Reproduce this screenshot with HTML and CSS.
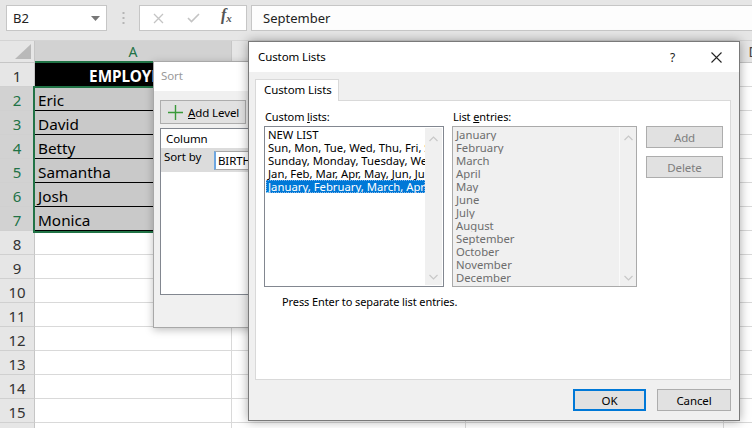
FILE: index.html
```html
<!DOCTYPE html>
<html>
<head>
<meta charset="utf-8">
<link rel="stylesheet" href="styles.css">
</head>
<body>
<div class="app">
  <div class="formula-bar">
    <div class="namebox">
      <span>B2</span>
      <svg class="dd" width="9" height="5" viewBox="0 0 9 5"><path d="M0 0H9L4.5 5Z" fill="#777"/></svg>
    </div>
    <div class="grip">
      <svg width="3" height="12" viewBox="0 0 3 12"><rect x="0.5" y="0" width="2" height="2" fill="#b5b5b5"/><rect x="0.5" y="5" width="2" height="2" fill="#b5b5b5"/><rect x="0.5" y="10" width="2" height="2" fill="#b5b5b5"/></svg>
    </div>
    <div class="fx-box">
      <svg class="ic-x" width="11" height="11" viewBox="0 0 11 11"><path d="M1 1L10 10M10 1L1 10" stroke="#c4c4c4" stroke-width="1.3" fill="none"/></svg>
      <svg class="ic-ok" width="13" height="10" viewBox="0 0 13 10"><path d="M1 5L4.5 8.5L12 1" stroke="#c4c4c4" stroke-width="1.6" fill="none"/></svg>
      <span class="fx">f<sub>x</sub></span>
    </div>
    <div class="formula-input">September</div>
  </div>

  <div class="sheet">
    <div class="corner"><span class="tri"></span></div>
    <div class="colhead sel">A</div>
    <div class="colhead">B</div>
    <div class="colhead">C</div>
    <div class="colhead">D</div>

    <div class="rowhead">1</div><div class="cell title">EMPLOYEES</div><div class="cell"></div><div class="cell"></div><div class="cell"></div>
    <div class="rowhead sel">2</div><div class="cell name">Eric</div><div class="cell"></div><div class="cell"></div><div class="cell"></div>
    <div class="rowhead sel">3</div><div class="cell name">David</div><div class="cell"></div><div class="cell"></div><div class="cell"></div>
    <div class="rowhead sel">4</div><div class="cell name">Betty</div><div class="cell"></div><div class="cell"></div><div class="cell"></div>
    <div class="rowhead sel">5</div><div class="cell name">Samantha</div><div class="cell"></div><div class="cell"></div><div class="cell"></div>
    <div class="rowhead sel">6</div><div class="cell name">Josh</div><div class="cell"></div><div class="cell"></div><div class="cell"></div>
    <div class="rowhead sel">7</div><div class="cell name">Monica</div><div class="cell"></div><div class="cell"></div><div class="cell"></div>
    <div class="rowhead">8</div><div class="cell"></div><div class="cell"></div><div class="cell"></div><div class="cell"></div>
    <div class="rowhead">9</div><div class="cell"></div><div class="cell"></div><div class="cell"></div><div class="cell"></div>
    <div class="rowhead">10</div><div class="cell"></div><div class="cell"></div><div class="cell"></div><div class="cell"></div>
    <div class="rowhead">11</div><div class="cell"></div><div class="cell"></div><div class="cell"></div><div class="cell"></div>
    <div class="rowhead">12</div><div class="cell"></div><div class="cell"></div><div class="cell"></div><div class="cell"></div>
    <div class="rowhead">13</div><div class="cell"></div><div class="cell"></div><div class="cell"></div><div class="cell"></div>
    <div class="rowhead">14</div><div class="cell"></div><div class="cell"></div><div class="cell"></div><div class="cell"></div>
    <div class="rowhead">15</div><div class="cell"></div><div class="cell"></div><div class="cell"></div><div class="cell"></div>
    <div class="rowhead">16</div><div class="cell"></div><div class="cell"></div><div class="cell"></div><div class="cell"></div>
  </div>

  <div class="selection"></div>

  <div class="dlg sort-dlg">
    <div class="sort-title">Sort</div>
    <div class="sort-body">
      <div class="sort-toolbar">
        <button class="btn add-level">
          <svg width="15" height="15" viewBox="0 0 15 15"><path d="M7.5 0V15M0 7.5H15" stroke="#3a9a3a" stroke-width="1.4" fill="none"/></svg>
          <span><u>A</u>dd Level</span>
        </button>
      </div>
      <div class="sort-grid">
        <div class="sort-head">Column</div>
        <div class="sort-row">
          <span class="sort-lbl">Sort by</span>
          <span class="combo">BIRTH</span>
        </div>
      </div>
    </div>
  </div>

  <div class="dlg custom-dlg">
    <div class="cl-titlebar">
      <span class="cl-title">Custom Lists</span>
      <span class="help">?</span>
      <svg class="close" width="11" height="11" viewBox="0 0 11 11"><path d="M0.5 0.5L10.5 10.5M10.5 0.5L0.5 10.5" stroke="#222" stroke-width="1.1" fill="none"/></svg>
    </div>
    <div class="cl-body">
      <div class="tabs"><div class="tab">Custom Lists</div></div>
      <div class="panel">
        <div class="cols">
          <div class="col-left">
            <div class="lbl">Custom <u>l</u>ists:</div>
            <div class="listbox lb-left">
              <div class="items">
                <div class="item">NEW LIST</div>
                <div class="item">Sun, Mon, Tue, Wed, Thu, Fri, Sat</div>
                <div class="item">Sunday, Monday, Tuesday, Wednesday, Thursday</div>
                <div class="item">Jan, Feb, Mar, Apr, May, Jun, Jul, Aug</div>
                <div class="item selected">January, February, March, April, May</div>
              </div>
              <div class="scroll">
                <svg width="9" height="6" viewBox="0 0 9 6"><path d="M0.5 5L4.5 1L8.5 5" stroke="#c8c8c8" stroke-width="1.2" fill="none"/></svg>
                <svg width="9" height="6" viewBox="0 0 9 6"><path d="M0.5 1L4.5 5L8.5 1" stroke="#c8c8c8" stroke-width="1.2" fill="none"/></svg>
              </div>
            </div>
          </div>
          <div class="col-mid">
            <div class="lbl">List <u>e</u>ntries:</div>
            <div class="listbox lb-right">
              <div class="items">
                <div class="item">January</div>
                <div class="item">February</div>
                <div class="item">March</div>
                <div class="item">April</div>
                <div class="item">May</div>
                <div class="item">June</div>
                <div class="item">July</div>
                <div class="item">August</div>
                <div class="item">September</div>
                <div class="item">October</div>
                <div class="item">November</div>
                <div class="item">December</div>
              </div>
              <div class="scroll">
                <svg width="9" height="6" viewBox="0 0 9 6"><path d="M0.5 5L4.5 1L8.5 5" stroke="#c8c8c8" stroke-width="1.2" fill="none"/></svg>
                <svg width="9" height="6" viewBox="0 0 9 6"><path d="M0.5 1L4.5 5L8.5 1" stroke="#c8c8c8" stroke-width="1.2" fill="none"/></svg>
              </div>
            </div>
          </div>
          <div class="col-right">
            <button class="btn side-btn">Add</button>
            <button class="btn side-btn">Delete</button>
          </div>
        </div>
        <div class="hint">Press Enter to separate list entries.</div>
      </div>
      <div class="footer">
        <button class="btn foot-btn default">OK</button>
        <button class="btn foot-btn">Cancel</button>
      </div>
    </div>
  </div>
</div>
</body>
</html>
```

FILE: styles.css
```css
* { box-sizing: border-box; }
html, body { margin: 0; padding: 0; }
body {
  width: 752px;
  height: 428px;
  overflow: hidden;
  background: #fff;
  font-family: "Noto Sans", "Open Sans", sans-serif;
}
.app {
  position: relative;
  width: 752px;
  height: 428px;
  overflow: hidden;
}

/* formula bar */
.formula-bar {
  height: 41px;
  background: #e6e6e6;
  display: flex;
  align-items: flex-start;
  padding: 5px 0 0 6px;
  border-bottom: 1px solid #d4d4d4;
}
.namebox {
  width: 101px;
  height: 26px;
  background: #fff;
  border: 1px solid #c6c6c6;
  display: flex;
  align-items: center;
  justify-content: space-between;
  padding: 0 6px 0 6px;
  font-size: 13px;
  color: #222;
}
.namebox .dd { margin-top: 1px; }
.grip {
  width: 32px;
  height: 26px;
  display: flex;
  align-items: center;
  justify-content: center;
}
.fx-box {
  width: 108px;
  height: 26px;
  background: #fff;
  border: 1px solid #c6c6c6;
  display: flex;
  align-items: center;
  padding-left: 13px;
}
.ic-x { margin-right: 23px; }
.ic-ok { margin-right: 21px; }
.fx {
  font-family: "Liberation Serif", "DejaVu Serif", serif;
  font-style: italic;
  font-weight: bold;
  font-size: 16px;
  line-height: 16px;
  color: #555;
  margin-top: -3px;
}
.fx sub { font-size: 11px; vertical-align: -2px; }
.formula-input {
  flex: 1;
  margin-left: 4px;
  height: 26px;
  background: #fdfdfd;
  border: 1px solid #c6c6c6;
  border-right: none;
  padding-left: 11px;
  font-size: 13px;
  line-height: 24px;
  color: #222;
}

/* sheet */
.sheet {
  display: grid;
  grid-template-columns: 35px 197px 234px 258px 60px;
  grid-template-rows: 22px;
  grid-auto-rows: 24px;
}
.corner {
  background: #e6e6e6;
  border-right: 1px solid #c6c6c6;
  border-bottom: 1px solid #c6c6c6;
  position: relative;
}
.tri {
  position: absolute;
  right: 3px;
  bottom: 3px;
  width: 0;
  height: 0;
  border-left: 16px solid transparent;
  border-bottom: 15px solid #b9b9b9;
}
.colhead {
  background: #e6e6e6;
  border-right: 1px solid #c6c6c6;
  border-bottom: 1px solid #c6c6c6;
  text-align: center;
  font-size: 14px;
  line-height: 22px;
  color: #444;
}
.colhead.sel {
  background: #d2d2d2;
  color: #217346;
  border-bottom: 2px solid #217346;
}
.rowhead {
  background: #e6e6e6;
  border-right: 1px solid #c6c6c6;
  border-bottom: 1px solid #d0d0d0;
  text-align: center;
  font-size: 15px;
  line-height: 21px;
  padding-top: 3px;
  color: #333;
}
.rowhead.sel {
  background: #d2d2d2;
  color: #217346;
}
.cell {
  border-right: 1px solid #d9d9d9;
  border-bottom: 1px solid #d9d9d9;
  font-size: 15.3px;
  line-height: 21px;
  padding-top: 3px;
  padding-left: 3px;
  white-space: nowrap;
  overflow: hidden;
  color: #000;
}
.cell.title {
  background: #000;
  color: #fff;
  font-weight: bold;
  text-align: center;
  padding-left: 0;
}
.cell.name {
  background: #c9c9c9;
  border-bottom: 1px solid #000;
  border-right: 1px solid #000;
}
.selection {
  position: absolute;
  left: 33px;
  top: 86px;
  width: 202px;
  height: 147px;
  border: 2px solid #217346;
  pointer-events: none;
}

/* dialogs */
.dlg {
  position: absolute;
  background: #f0f0f0;
  font-size: 11px;
  letter-spacing: -0.1px;
}
.sort-dlg {
  left: 153px;
  top: 61px;
  width: 300px;
  height: 267px;
  border: 1px solid #a8a8a8;
  box-shadow: 0 2px 8px rgba(0,0,0,0.25);
}
.sort-title {
  height: 29px;
  background: #fff;
  font-size: 11.5px;
  color: #9a9a9a;
  padding: 6px 0 0 7px;
}
.sort-body { padding: 9px 0 0 6px; }
.btn {
  font-family: inherit;
  letter-spacing: inherit;
  background: #e1e1e1;
  border: 1px solid #adadad;
  font-size: 11px;
  color: #000;
  padding: 0;
  margin: 0;
}
.add-level {
  width: 86px;
  height: 24px;
  display: flex;
  align-items: center;
  padding-left: 7px;
  gap: 5px;
  font-size: 11.5px;
}
.sort-grid {
  margin-top: 4px;
  height: 167px;
  background: #fff;
  border: 1px solid #828790;
  padding-top: 2px;
}
.sort-head {
  font-size: 11.5px;
  padding-left: 5px;
  height: 17px;
}
.sort-row {
  height: 24px;
  background: #dcdcdc;
  display: flex;
  align-items: center;
  padding-left: 3px;
}
.sort-lbl {
  font-size: 11.5px;
  width: 50px;
  align-self: flex-start;
  margin-top: 1px;
}
.combo {
  height: 19px;
  width: 120px;
  background: #fff;
  border: 1px solid #a8a8a8;
  border-left: 2px solid #6ea6e0;
  font-size: 11.5px;
  line-height: 17px;
  padding-left: 2px;
}

.custom-dlg {
  left: 248px;
  top: 41px;
  width: 492px;
  height: 380px;
  border: 1px solid #7a7a7a;
  box-shadow: 0 0 10px rgba(0,0,0,0.35);
  display: flex;
  flex-direction: column;
}
.cl-titlebar {
  height: 30px;
  background: #fff;
  display: flex;
  align-items: center;
  padding-left: 9px;
}
.cl-title { font-size: 11.5px; color: #000; flex: 1; margin-top: -1px; }
.help { font-size: 12px; color: #222; margin-right: 36px; }
.close { margin-right: 17px; }
.cl-body {
  flex: 1;
  padding: 7px 8px 0 6px;
  display: flex;
  flex-direction: column;
}
.tabs { display: flex; height: 21px; }
.tab {
  width: 84px;
  height: 22px;
  background: #fff;
  border: 1px solid #d9d9d9;
  border-bottom: none;
  font-size: 11.5px;
  padding: 2px 0 0 8px;
  position: relative;
  z-index: 1;
}
.panel {
  height: 280px;
  background: #fff;
  border: 1px solid #d9d9d9;
  padding: 8px 0 0 8px;
}
.cols { display: flex; }
.lbl {
  height: 17px;
  line-height: 15px;
  padding-left: 1px;
}
.listbox {
  height: 161px;
  display: flex;
  overflow: hidden;
}
.lb-left {
  width: 180px;
  border: 1px solid #828790;
  background: #fff;
}
.lb-right {
  width: 185px;
  border: 1px solid #aaaaaa;
  background: #f0f0f0;
}
.col-mid { margin-left: 8px; }
.items {
  flex: 1;
  overflow: hidden;
  padding-top: 1px;
}
.item {
  font-size: 11.3px;
  letter-spacing: 0;
  line-height: 13px;
  height: 13px;
  white-space: nowrap;
  overflow: hidden;
  padding-left: 3px;
  color: #000;
}
.lb-left .item.selected {
  background: #0078d7;
  color: #fff;
  margin-left: 1px;
  padding-left: 2px;
  outline: 1px dotted #7fb4e8;
  outline-offset: -1px;
}
.lb-right .item { color: #6d6d6d; padding-left: 3px; }
.scroll {
  width: 17px;
  background: #f0f0f0;
  display: flex;
  flex-direction: column;
  justify-content: space-between;
  align-items: center;
  padding: 8px 0 5px;
  margin: 1px 1px 1px 0;
}
.lb-right .scroll { background: #f0f0f0; border-left: 1px solid #fafafa; margin: 0; }
.col-right {
  margin-left: 9px;
  padding-top: 17px;
  display: flex;
  flex-direction: column;
  gap: 8px;
}
.side-btn {
  width: 77px;
  height: 22px;
  color: #7e7e7e;
  font-size: 11.5px;
}
.hint {
  padding-left: 18px;
  margin-top: 7px;
}
.footer {
  display: flex;
  justify-content: flex-end;
  gap: 11px;
  padding-top: 9px;
  padding-right: 0;
}
.foot-btn {
  width: 74px;
  height: 22px;
  font-size: 11.5px;
}
.foot-btn.default { border: 2px solid #0078d7; width: 73px; }
```
